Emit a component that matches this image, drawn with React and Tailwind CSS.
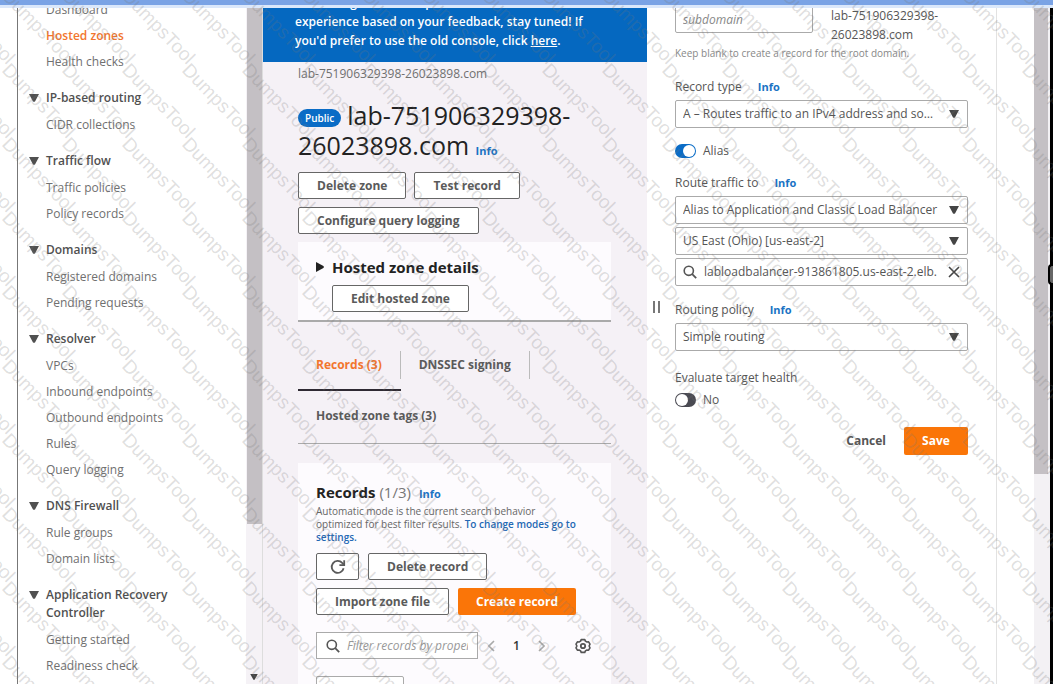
import { useState } from "react";

const NAV = [
  {
    title: null,
    items: ["Dashboard", "Hosted zones", "Health checks"],
  },
  { title: "IP-based routing", items: ["CIDR collections"] },
  { title: "Traffic flow", items: ["Traffic policies", "Policy records"] },
  { title: "Domains", items: ["Registered domains", "Pending requests"] },
  {
    title: "Resolver",
    items: ["VPCs", "Inbound endpoints", "Outbound endpoints", "Rules", "Query logging"],
  },
  { title: "DNS Firewall", items: ["Rule groups", "Domain lists"] },
  {
    title: "Application Recovery Controller",
    items: ["Getting started", "Readiness check"],
  },
];

// ============================
// ICONS
// ============================
const Caret = ({ className }) => (
  <svg viewBox="0 0 10 8" className={className} aria-hidden="true">
    <path d="M0 0h10L6 7.4q-1 .9-2 0z" fill="currentColor" />
  </svg>
);

const SearchIcon = () => (
  <svg viewBox="0 0 14 14" className="h-3.5 w-3.5 shrink-0 text-[#555]" aria-hidden="true">
    <circle cx="5.8" cy="5.8" r="4.6" fill="none" stroke="currentColor" strokeWidth="1.6" />
    <path d="M9.2 9.2l4 4" stroke="currentColor" strokeWidth="1.8" />
  </svg>
);

const RefreshIcon = () => (
  <svg viewBox="0 0 16 16" className="h-4 w-4 shrink-0" aria-hidden="true">
    <path
      d="M13.6 9.2a6 6 0 1 1-1.4-5.3l1.6 1.7"
      fill="none"
      stroke="currentColor"
      strokeWidth="1.8"
    />
    <path d="M14.2 1.2v4.9H9.4" fill="none" stroke="currentColor" strokeWidth="1.8" />
  </svg>
);

const GearIcon = () => (
  <svg viewBox="0 0 16 16" className="h-4 w-4" fill="none" stroke="currentColor" aria-hidden="true">
    <path
      d="M6.2 1.6h3.6l.6 1.5 1.6.9 1.6-.2 1.4 2.4-.9 1.8.9 1.8-1.4 2.4-1.6-.2-1.6.9-.6 1.5H6.2l-.6-1.5-1.6-.9-1.6.2L1 9.8l.9-1.8L1 6.2l1.4-2.4 1.6.2 1.6-.9z"
      strokeWidth="1.6"
      strokeLinejoin="round"
    />
    <circle cx="8" cy="8" r="2.2" strokeWidth="1.8" />
  </svg>
);

// ============================
// SMALL CONTROLS
// ============================
const Button = ({ children, className = "", ...rest }) => (
  <button
    type="button"
    className={`h-[27px] rounded-[2px] border border-[#666] bg-white px-[18px] text-xs font-bold whitespace-nowrap text-[#5a5a5a] ${className}`}
    {...rest}
  >
    {children}
  </button>
);

const InfoLink = () => (
  <a href="#info" className="text-[11px] leading-none font-bold text-[#1a73c4]">
    Info
  </a>
);

const Select = ({ id, label, value }) => (
  <div className="relative">
    <select
      id={id}
      aria-label={label}
      className="block h-7 w-full appearance-none rounded-[2px] border border-[#aaa] bg-white pr-7 pl-[7px] text-xs text-[#555]"
    >
      <option>{value}</option>
    </select>
    <Caret className="pointer-events-none absolute top-2.5 right-[9px] h-2 w-2.5 text-[#444]" />
  </div>
);

const Toggle = ({ id, label, checked, onChange }) => (
  <div className="flex items-center gap-[7px]">
    <input
      id={id}
      type="checkbox"
      role="switch"
      checked={checked}
      onChange={onChange}
      className="flex h-3.5 w-[21px] appearance-none items-center rounded-full bg-[#4a4a52] p-px before:h-3 before:w-3 before:rounded-full before:bg-white checked:justify-end checked:bg-[#0a6cc6]"
    />
    <label htmlFor={id} className="text-xs leading-[18px] text-[#555]">
      {label}
    </label>
  </div>
);

// repeated diagonal text over the whole page
const Watermark = () => (
  <svg
    className="pointer-events-none absolute inset-0 h-full w-full"
    fontFamily="Liberation Sans, sans-serif"
    fontSize="19"
    fill="#777"
    fillOpacity="0.24"
    aria-hidden="true"
  >
    {Array.from({ length: 11 }, (_, row) =>
      Array.from({ length: 19 }, (_, col) => (
        <text
          key={`${row}-${col}`}
          transform={`translate(${col * 60 - 59} ${row * 74 - 77}) rotate(46)`}
        >
          DumpsTool
        </text>
      ))
    )}
  </svg>
);

// ============================
// SIDEBAR
// ============================
const Sidebar = () => (
  <aside className="ml-[17px] flex w-[246px] shrink-0 border-l border-[#777] bg-white">
    <nav className="-mt-[7px] flex flex-1 flex-col gap-[18px] pl-7 text-xs leading-[18px] text-[#707070]">
      {NAV.map((group) => (
        <div key={group.title || "top"}>
          {group.title && (
            <h2 className="relative mb-[9px] max-w-[140px] font-semibold text-[#505050]">
              <Caret className="absolute top-[5px] -left-[17px] h-2 w-2.5" />
              {group.title}
            </h2>
          )}
          <ul className="flex flex-col gap-2">
            {group.items.map((item) => (
              <li key={item}>
                <a
                  href="#nav"
                  className={item === "Hosted zones" ? "font-semibold text-[#f2762e]" : ""}
                >
                  {item}
                </a>
              </li>
            ))}
          </ul>
        </div>
      ))}
    </nav>
    <div className="flex w-[17px] flex-col items-center justify-between border-r border-[#ddd] bg-[#f5f2f6] pb-1">
      <div className="h-[516px] w-[15px] bg-[#c4c0c4]" />
      <Caret className="h-1.5 w-2 text-[#444]" />
    </div>
  </aside>
);

// ============================
// HOSTED ZONE
// ============================
const HostedZone = () => (
  <main className="min-w-0 flex-1 bg-[#f5f1f6]">
    <div className="bg-[#0568c0] pr-16 pb-3 pl-8 text-xs leading-[19px] font-semibold text-white">
      <p className="-mt-[15px]">
        continuing to make improvements to the
        <br />
        experience based on your feedback, stay tuned! If you&apos;d prefer to use the old console,
        click{" "}
        <a href="#old" className="underline">
          here
        </a>
        .
      </p>
    </div>

    <div className="pr-9 pl-[35px]">
      <p className="pt-[3px] text-xs leading-[18px] text-[#707070]">
        lab-751906329398-26023898.com
      </p>

      <h1 className="mt-[17px] text-[25px] leading-[30px] text-[#222]">
        <span className="mr-1.5 inline-block rounded-full bg-[#0a6cc6] px-[7px] align-middle text-[10px] leading-[18px] font-semibold text-white">
          Public
        </span>
        lab-751906329398-26023898.com <InfoLink />
      </h1>

      <div className="mt-3 flex flex-wrap gap-2">
        <Button>Delete zone</Button>
        <Button>Test record</Button>
        <Button>Configure query logging</Button>
      </div>

      <section className="mt-2 border-b-2 border-[#aaa] bg-[#fdfbfe] px-[18px] pt-3.5 pb-2">
        <h2 className="flex items-center gap-2 text-[15px] leading-[22px] font-bold text-[#222]">
          <svg viewBox="0 0 8 10" className="h-2.5 w-2" aria-hidden="true">
            <path d="M0 0l7.4 4q1 1 0 2L0 10z" fill="currentColor" />
          </svg>
          Hosted zone details
        </h2>
        <Button className="mt-[7px] ml-4">Edit hosted zone</Button>
      </section>

      <div className="mt-[29px] border-b border-[#aaa] text-xs font-bold text-[#5a5a5a]">
        <div className="flex">
          <button type="button" className="border-b-2 border-[#2f2a33] pb-2.5 text-[#f2762e]">
            <span className="block border-r border-[#bbb] px-[18px] leading-7">Records (3)</span>
          </button>
          <button type="button" className="pb-3">
            <span className="block border-r border-[#bbb] px-[18px] leading-7">DNSSEC signing</span>
          </button>
        </div>
        <button type="button" className="px-[18px] pt-[15px] pb-[17px] leading-5">
          Hosted zone tags (3)
        </button>
      </div>

      <section className="mt-[19px] bg-[#fdfbfe] px-[18px] pt-[18px]">
        <div className="flex items-baseline gap-2 leading-[22px]">
          <h2 className="text-[15px] font-bold text-[#222]">
            Records <span className="font-normal text-[#777]">(1/3)</span>
          </h2>
          <InfoLink />
        </div>
        <p className="mt-0.5 text-[10px] leading-[13px] text-[#666]">
          Automatic mode is the current search behavior
          <br />
          optimized for best filter results.{" "}
          <a href="#settings" className="font-semibold text-[#2468b4]">
            To change modes go to settings.
          </a>
        </p>
        <div className="mt-[9px] flex flex-wrap gap-x-[9px] gap-y-2">
          <Button aria-label="Refresh" className="flex w-[43px] items-center justify-center">
            <RefreshIcon />
          </Button>
          <Button>Delete record</Button>
          <Button>Import zone file</Button>
          <button
            type="button"
            className="h-[27px] rounded-[2px] bg-[#fa7508] px-[18px] text-xs font-bold text-white"
          >
            Create record
          </button>
        </div>
        <div className="mt-[17px] flex items-center">
          <label className="flex h-[27px] w-[162px] items-center gap-[7px] border border-[#aaa] bg-white px-[9px]">
            <SearchIcon />
            <input
              aria-label="Filter records"
              placeholder="Filter records by property or value"
              className="min-w-0 flex-1 text-xs italic placeholder:text-[#999]"
            />
          </label>
          <div className="flex flex-1 items-center justify-between pr-0.5 pl-2.5 text-[#555]">
            <button type="button" aria-label="Previous page">
              <svg viewBox="0 0 7 12" className="h-3 w-[7px] text-[#aaa]">
                <path d="M6 1L1 6l5 5" fill="none" stroke="currentColor" strokeWidth="1.6" />
              </svg>
            </button>
            <button type="button" className="text-xs font-semibold text-[#333]">
              1
            </button>
            <button type="button" aria-label="Next page">
              <svg viewBox="0 0 7 12" className="h-3 w-[7px] text-[#aaa]">
                <path d="M1 1l5 5-5 5" fill="none" stroke="currentColor" strokeWidth="1.6" />
              </svg>
            </button>
            <button type="button" aria-label="Preferences" className="ml-3">
              <GearIcon />
            </button>
          </div>
        </div>
        <div className="mt-[17px] h-7 w-[88px] rounded-[2px] border border-[#aaa] bg-white" />
      </section>
    </div>
  </main>
);

// ============================
// RECORD PANEL
// ============================
const RecordPanel = () => {
  const [alias, setAlias] = useState(true);
  const [evaluate, setEvaluate] = useState(false);

  return (
    <aside className="flex w-[403px] shrink-0 bg-white">
      <div className="w-7 pt-[293px] pl-1.5">
        <div className="h-3 w-[7px] border-x-2 border-[#777]" />
      </div>

      <form className="flex-1 text-xs leading-[18px] text-[#555]">
        <div className="flex gap-[18px]">
          <input
            aria-label="Record name"
            placeholder="subdomain"
            className="-mt-[3px] h-7 w-[138px] rounded-[2px] border border-[#aaa] px-[7px] italic placeholder:text-[#888]"
          />
          <p className="-mt-[2px] w-[130px] leading-[19px]">
            lab-751906329398-
            <br />
            26023898.com
          </p>
        </div>
        <p className="text-[10px] text-[#888]">Keep blank to create a record for the root domain.</p>

        <div className="mt-4 mb-1 flex items-baseline gap-4">
          <label htmlFor="record-type">Record type</label>
          <InfoLink />
        </div>
        <Select id="record-type" value="A – Routes traffic to an IPv4 address and so…" />

        <div className="mt-3.5">
          <Toggle id="alias" label="Alias" checked={alias} onChange={() => setAlias(!alias)} />
        </div>

        <div className="mt-3.5 mb-1 flex items-baseline gap-4">
          <label htmlFor="route-to">Route traffic to</label>
          <InfoLink />
        </div>
        <div className="flex flex-col gap-[3px]">
          <Select id="route-to" value="Alias to Application and Classic Load Balancer" />
          <Select id="region" label="Region" value="US East (Ohio) [us-east-2]" />
          <div className="flex h-7 items-center gap-[7px] rounded-[2px] border border-[#aaa] px-[7px]">
            <SearchIcon />
            <input
              aria-label="Load balancer"
              defaultValue="labloadbalancer-913861805.us-east-2.elb."
              className="min-w-0 flex-1"
            />
            <button type="button" aria-label="Clear">
              <svg viewBox="0 0 12 12" className="h-3 w-3 text-[#444]">
                <path d="M1 1l10 10M11 1L1 11" stroke="currentColor" strokeWidth="1.6" />
              </svg>
            </button>
          </div>
        </div>

        <div className="mt-[15px] mb-1 flex items-baseline gap-4">
          <label htmlFor="policy">Routing policy</label>
          <InfoLink />
        </div>
        <Select id="policy" value="Simple routing" />

        <p className="mt-[18px]">Evaluate target health</p>
        <div className="mt-1">
          <Toggle
            id="evaluate"
            label={evaluate ? "Yes" : "No"}
            checked={evaluate}
            onChange={() => setEvaluate(!evaluate)}
          />
        </div>

        <div className="mt-[18px] flex items-center justify-end gap-[18px] font-bold">
          <button type="button">Cancel</button>
          <button type="submit" className="h-7 w-16 rounded-[2px] bg-[#fa7508] text-white">
            Save
          </button>
        </div>
      </form>

      <div className="ml-7 flex w-[54px] justify-end border-l border-[#e2e2e2]">
        <div className="w-4 bg-[#f3f1f4]">
          <div className="h-[466px] w-3.5 bg-[#c4c0c4]" />
        </div>
      </div>
    </aside>
  );
};

export default function App() {
  return (
    <div className="relative flex h-screen flex-col overflow-hidden bg-white font-['Open_Sans',sans-serif]">
      <header className="h-2 shrink-0 border-b-3 border-[#dbe8fb] bg-[#7aa3e5]" />
      <div className="flex min-h-0 flex-1 overflow-hidden">
        <Sidebar />
        <HostedZone />
        <RecordPanel />
        <div className="relative w-[3px] shrink-0 bg-black">
          <div className="absolute top-64 right-0 h-[21px] w-[5px] rounded-l-sm border-2 border-r-0 border-black bg-[#666]" />
        </div>
      </div>
      <Watermark />
    </div>
  );
}
